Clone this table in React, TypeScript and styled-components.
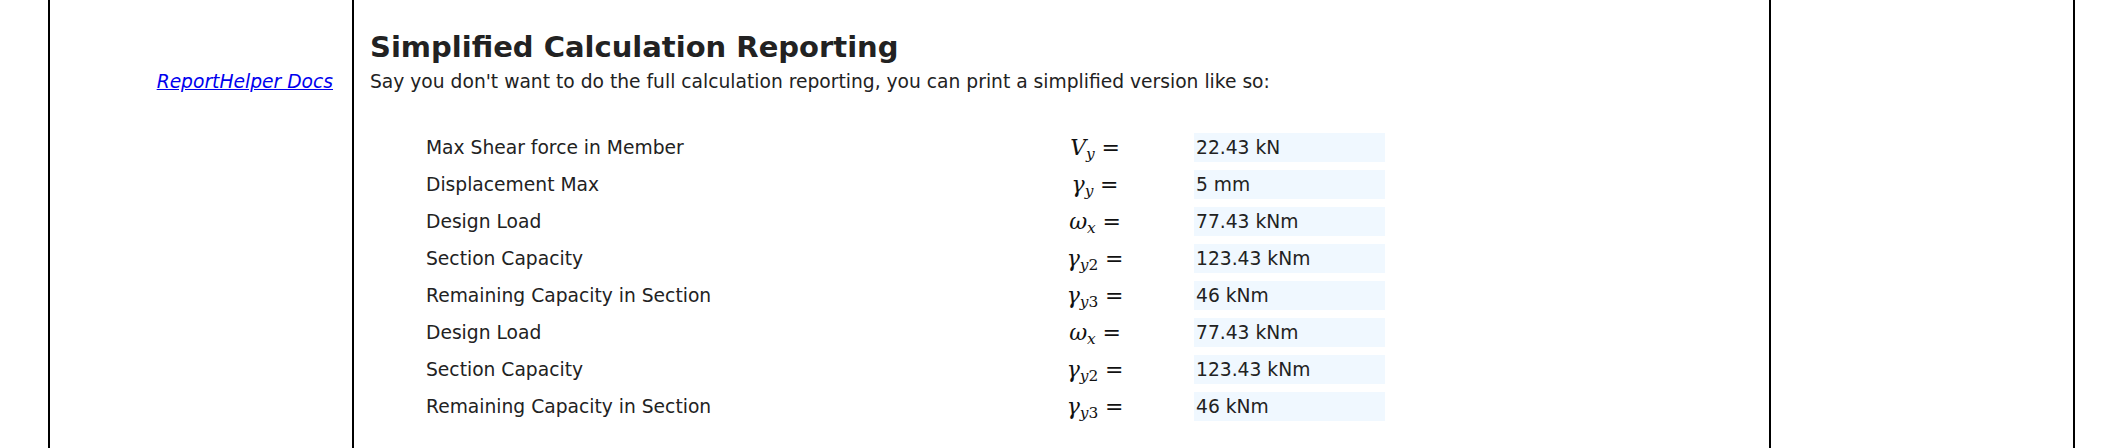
import React from "react";
import styled, { createGlobalStyle } from "styled-components";

const Global = createGlobalStyle`
  html, body { margin: 0; padding: 0; background: #ffffff; }
  body { font-family: "DejaVu Sans", "Noto Sans", sans-serif; color: #222222; }
`;

const Page = styled.div`
  display: grid;
  grid-template-columns: 304px 1417px 306px;
  padding-left: 48px;
  min-height: 448px;
`;

const Sidebar = styled.aside`
  border-left: 2px solid #000;
  padding: 71px 19px 0 0;
  text-align: right;
`;

const DocLink = styled.a`
  font-size: 18.7px;
  line-height: 22px;
  font-style: italic;
  color: #0000ee;
  text-decoration: underline;
`;

const Main = styled.main`
  border-left: 2px solid #000;
  padding: 30px 16px 0 16px;
`;

const Aside = styled.aside`
  border-left: 2px solid #000;
  border-right: 2px solid #000;
`;

const Title = styled.h2`
  margin: 0;
  font-size: 29px;
  line-height: 35px;
  font-weight: bold;
  color: #222222;
`;

const Intro = styled.p`
  margin: 6px 0 0 0;
  font-size: 18.7px;
  line-height: 22px;
  color: #222222;
`;

const Table = styled.div`
  display: grid;
  grid-template-columns: 570px 198px 191px;
  grid-auto-rows: 29px;
  row-gap: 8px;
  margin: 40px 0 0 56px;
  align-items: center;
`;

const Label = styled.div`
  font-size: 18.7px;
  color: #222222;
`;

const MathCell = styled.div`
  font-family: "DejaVu Serif", "Liberation Serif", serif;
  font-size: 22px;
  text-align: center;
  color: #111111;
  white-space: nowrap;
`;

const Var = styled.i`
  font-style: italic;
`;

const Sub = styled.span`
  font-size: 0.7em;
  position: relative;
  top: 0.25em;
`;

const SubVar = styled.i`
  font-style: italic;
`;

const Eq = styled.span`
  margin-left: 0.3em;
  font-weight: 300;
`;

const Value = styled.div`
  height: 29px;
  background: #f0f8ff;
  font-size: 18.7px;
  line-height: 29px;
  padding-left: 2px;
  color: #222222;
`;

type Row = { label: string; sym: string; sub: string; num?: string; value: string };

const rows: Row[] = [
  { label: "Max Shear force in Member", sym: "V", sub: "y", value: "22.43 kN" },
  { label: "Displacement Max", sym: "γ", sub: "y", value: "5 mm" },
  { label: "Design Load", sym: "ω", sub: "x", value: "77.43 kNm" },
  { label: "Section Capacity", sym: "γ", sub: "y", num: "2", value: "123.43 kNm" },
  { label: "Remaining Capacity in Section", sym: "γ", sub: "y", num: "3", value: "46 kNm" },
  { label: "Design Load", sym: "ω", sub: "x", value: "77.43 kNm" },
  { label: "Section Capacity", sym: "γ", sub: "y", num: "2", value: "123.43 kNm" },
  { label: "Remaining Capacity in Section", sym: "γ", sub: "y", num: "3", value: "46 kNm" },
];

export default function App() {
  return (
    <>
      <Global />
      <Page>
        <Sidebar>
          <DocLink href="#">ReportHelper Docs</DocLink>
        </Sidebar>
        <Main>
          <Title>Simplified Calculation Reporting</Title>
          <Intro>
            Say you don't want to do the full calculation reporting, you can print a simplified version like so:
          </Intro>
          <Table>
            {rows.map((r, i) => (
              <React.Fragment key={i}>
                <Label>{r.label}</Label>
                <MathCell>
                  <Var>{r.sym}</Var>
                  <Sub>
                    <SubVar>{r.sub}</SubVar>
                    {r.num}
                  </Sub>
                  <Eq>=</Eq>
                </MathCell>
                <Value>{r.value}</Value>
              </React.Fragment>
            ))}
          </Table>
        </Main>
        <Aside />
      </Page>
    </>
  );
}
